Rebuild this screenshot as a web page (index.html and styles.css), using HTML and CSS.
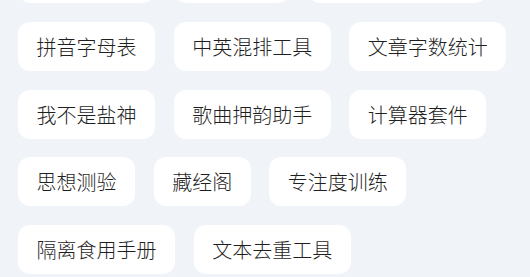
FILE: index.html
```html
<!DOCTYPE html>
<html lang="zh-CN">
<head>
<meta charset="utf-8">
<title>工具</title>
<link rel="stylesheet" href="styles.css">
</head>
<body>
<div class="tools">
  <div class="tool tool-blank tool-w5" aria-hidden="true"></div>
  <div class="tool tool-blank tool-w4" aria-hidden="true"></div>
  <div class="tool tool-blank tool-w7" aria-hidden="true"></div>
  <div class="tool">拼音字母表</div>
  <div class="tool">中英混排工具</div>
  <div class="tool">文章字数统计</div>
  <div class="tool">我不是盐神</div>
  <div class="tool">歌曲押韵助手</div>
  <div class="tool">计算器套件</div>
  <div class="tool">思想测验</div>
  <div class="tool">藏经阁</div>
  <div class="tool">专注度训练</div>
  <div class="tool">隔离食用手册</div>
  <div class="tool">文本去重工具</div>
</div>
</body>
</html>
```
FILE: styles.css
```css
html, body {
  margin: 0;
  padding: 0;
  background: #f0f3f8;
  overflow: hidden;
}
.tools {
  display: flex;
  flex-wrap: wrap;
  gap: 18.67px 18.67px;
  padding: 0 18px;
  margin-top: -45.67px;
}
.tool {
  display: flex;
  align-items: center;
  height: 49px;
  padding: 0 18.5px;
  background: #ffffff;
  border-radius: 12px;
  font-family: "Noto Sans CJK SC", "Noto Sans", sans-serif;
  font-weight: 300;
  font-size: 20px;
  color: #1f1f1f;
  white-space: nowrap;
}
.tool-blank {
  padding: 0;
}
.tool-w5 { width: 137px; }
.tool-w4 { width: 116px; }
.tool-w7 { width: 179px; }
```
